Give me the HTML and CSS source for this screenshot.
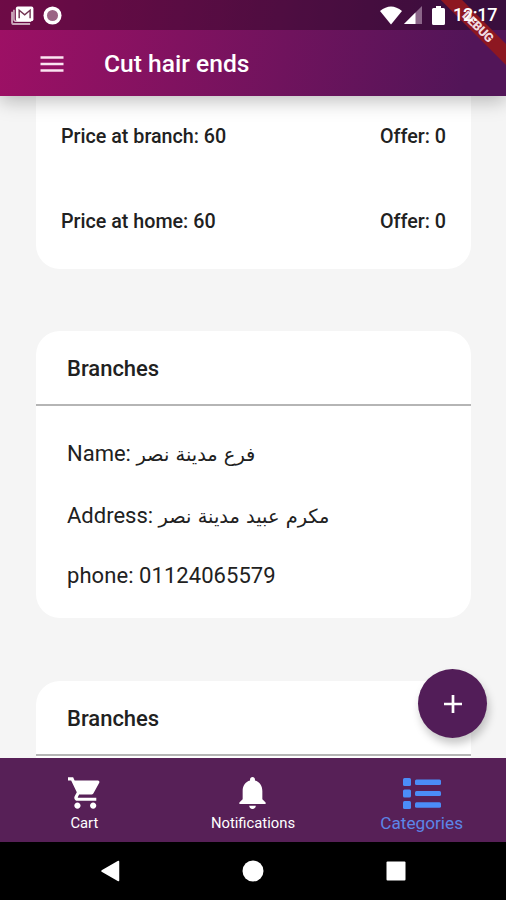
FILE: index.html
```html
<!DOCTYPE html>
<html lang="en">
<head>
<meta charset="utf-8">
<title>Cut hair ends</title>
<link rel="stylesheet" href="styles.css">
</head>
<body>
<div class="screen">
  <header class="header">
    <div class="status">
      <svg class="status-mail" viewBox="0 0 24 20"><path d="M1 6v11q0 2 2 2h17" fill="none" stroke="#c9a6b9" stroke-width="2"/><path d="M3 4v10q0 2 2 2h16" fill="none" stroke="#dcc5d1" stroke-width="1.5"/><rect x="5" y="0.5" width="18.5" height="15.5" rx="2" fill="#fff"/><path d="M8.500 13V4.500l5.800 4.700L20 4.500V13" fill="none" stroke="#713452" stroke-width="1.500"/></svg>
      <svg class="status-dot" viewBox="0 0 20 20"><circle cx="10" cy="10" r="9.5" fill="#fff"/><circle cx="10" cy="10" r="5.800" fill="#9b6585"/></svg>
      <span class="grow"></span>
      <svg class="status-wifi" viewBox="0 0 22 19"><path d="M0 5Q11-4 22 5L11 18.500z" fill="#fff"/></svg>
      <svg class="status-signal" viewBox="0 0 18 18"><path d="M0 18L18 0v18z" fill="#8b6689"/><path d="M0 18L11.500 6.500V18z" fill="#fff"/></svg>
      <svg class="status-battery" viewBox="0 0 13 19"><path d="M4 0h5v2h2.500q1.500 0 1.500 1.500v14q0 1.500-1.500 1.500h-10Q0 19 0 17.500v-14Q0 2 1.500 2H4z" fill="#fff"/></svg>
      <span class="clock">12:17</span>
    </div>
    <div class="appbar">
      <svg class="menu" viewBox="0 0 24 16"><path d="M.5 1.500h23M.5 8h23M.5 14.500h23" stroke="#fbe4f1" stroke-width="2.700"/></svg>
      <h1 class="title">Cut hair ends</h1>
    </div>
    <div class="debug"><span>DEBUG</span></div>
  </header>
  <main class="content">
    <section class="card prices">
      <div class="price"><span>Price at branch: 60</span><span>Offer: 0</span></div>
      <div class="price"><span>Price at home: 60</span><span>Offer: 0</span></div>
    </section>
    <section class="card branch">
      <h2 class="heading">Branches</h2>
      <div class="details">
        <p>Name: <bdi class="arabic">فرع مدينة نصر</bdi></p>
        <p>Address: <bdi class="arabic">مكرم عبيد مدينة نصر</bdi></p>
        <p class="phone">phone: 01124065579</p>
      </div>
    </section>
    <section class="card next">
      <h2 class="heading">Branches</h2>
    </section>
    <button class="fab" aria-label="Add"><svg viewBox="0 0 18 18"><path d="M9 0v18M0 9h18" stroke="#fff" stroke-width="2.700"/></svg></button>
  </main>
  <nav class="tabs">
    <div class="tab"><svg class="tab-icon" viewBox="1 2 21 20"><path fill="#fff" d="M7 18c-1.100 0-1.990.9-1.990 2S5.900 22 7 22s2-.9 2-2-.9-2-2-2zM1 2v2h2l3.600 7.590-1.350 2.450c-.16.280-.25.610-.25.960 0 1.100.9 2 2 2h12v-2H7.420c-.14 0-.25-.11-.25-.25l.03-.12.900-1.630h7.450c.75 0 1.410-.41 1.750-1.030l3.580-6.490A1 1 0 0 0 20 4H5.210l-.94-2H1zm16 16c-1.100 0-1.990.9-1.990 2s.89 2 1.990 2 2-.9 2-2-.9-2-2-2z"/></svg><span>Cart</span></div>
    <div class="tab"><svg class="tab-icon bell" viewBox="4 2.500 16 19.500"><path fill="#fff" d="M12 22c1.100 0 2-.9 2-2h-4c0 1.100.89 2 2 2zm6-6v-5c0-3.070-1.640-5.640-4.500-6.320V4c0-.83-.67-1.500-1.500-1.500s-1.500.67-1.500 1.500v.68C7.630 5.360 6 7.920 6 11v5l-2 2v1h16v-1l-2-2z"/></svg><span>Notifications</span></div>
    <div class="tab active"><svg class="tab-icon list" viewBox="0 0 38 31"><g fill="#4b8df8"><rect width="8" height="8" rx="1.500"/><rect y="11.500" width="8" height="8" rx="1.500"/><rect y="23" width="8" height="8" rx="1.500"/><rect x="12" y="1.500" width="26" height="5.500" rx="1.500"/><rect x="12" y="13" width="26" height="5" rx="1.500"/><rect x="12" y="24.300" width="26" height="5.500" rx="1.500"/></g></svg><span>Categories</span></div>
  </nav>
  <div class="system">
    <svg viewBox="0 0 22 22"><path d="M18.500 1.500v19L2 11z" fill="#fff" stroke="#fff" stroke-width="1.500" stroke-linejoin="round"/></svg>
    <svg viewBox="0 0 22 22"><circle cx="11" cy="11" r="10.500" fill="#fff"/></svg>
    <svg viewBox="0 0 22 22"><rect x="1.500" y="1.500" width="19" height="19" rx="1" fill="#fff"/></svg>
  </div>
</div>
</body>
</html>
```
FILE: styles.css
```css
* { box-sizing: border-box; }
body { margin: 0; font-family: Roboto, "Liberation Sans", sans-serif; color: #212121; }
h1, h2, p { margin: 0; }
svg { display: block; flex: none; }
.screen { height: 900px; display: flex; flex-direction: column; overflow: hidden; background: #f5f5f5; }

.header { position: relative; z-index: 2; flex: none; height: 96px; background: linear-gradient(100deg, #9e1065 0%, #521558 92%); box-shadow: 0 5px 18px rgba(0,0,0,.26); }
.status { display: flex; height: 30px; align-items: center; padding: 0 9px 0 11px; background: rgba(0,0,0,.3); }
.status-mail { width: 23px; height: 19px; }
.status-dot { width: 19px; height: 19px; margin-left: 9px; }
.grow { flex: 1; }
.status-wifi { width: 22px; height: 19px; }
.status-signal { width: 18px; height: 18px; margin-left: 2px; }
.status-battery { width: 13px; height: 19px; margin-left: 10px; }
.clock { position: relative; z-index: 2; width: 44px; margin-left: 8px; color: #fff; font-size: 18px; line-height: 32px; font-weight: 500; white-space: nowrap; letter-spacing: -.3px; }
.appbar { display: flex; align-items: center; height: 66px; padding: 1px 0 0 40px; }
.menu { width: 24px; height: 16px; }
.title { margin-left: 40px; color: #fff; font-size: 24.600px; font-weight: 500; line-height: 30px; white-space: nowrap; }
.debug { position: absolute; top: 0; right: 0; width: 68px; height: 74px; overflow: hidden; }
.debug span { position: absolute; left: -30px; top: 19px; width: 140px; height: 15px; transform: rotate(45deg); background: #8d1721; color: #f1dce0; font-size: 12.500px; line-height: 15px; font-weight: 900; letter-spacing: -.4px; text-align: center; }

.content { position: relative; flex: 1; min-height: 0; overflow: hidden; padding: 0 35px 0 36px; }
.card { background: #fff; border-radius: 24px; }
.prices { height: 173px; border-radius: 0 0 24px 24px; padding: 28px 25px 0; font-size: 19.700px; font-weight: 500; line-height: 26px; }
.price { display: flex; justify-content: space-between; height: 85px; }
.branch { height: 287px; margin-top: 62px; }
.next { height: 287px; margin-top: 63px; }
.heading { height: 75px; padding-left: 31px; border-bottom: 2px solid #b5b5b5; font-size: 22px; font-weight: 500; line-height: 75px; }
.details { display: flex; flex-direction: column; padding: 33px 31px 0; font-size: 22px; line-height: 30px; gap: 32px; }
.details p { height: 30px; white-space: nowrap; }
.details .phone { margin-top: -2px; letter-spacing: .06px; }
.arabic { font-family: "DejaVu Sans", sans-serif; font-size: 19.400px; }
.fab { position: absolute; left: 418px; top: 573px; display: flex; align-items: center; justify-content: center; width: 69px; height: 69px; padding: 0; border: 0; border-radius: 50%; background: #521d58; box-shadow: 2px 6px 9px rgba(0,0,0,.22); }
.fab svg { width: 18px; height: 18px; }

.tabs { flex: none; display: grid; grid-template-columns: repeat(3, 1fr); height: 84px; padding-top: 19px; background: #572057; color: #fff; }
.tab { display: flex; flex-direction: column; align-items: center; font-size: 14.800px; line-height: 20px; }
.tab-icon { width: 33px; height: 32px; margin-bottom: 4px; }
.bell { width: 27px; }
.list { width: 38px; height: 31px; margin-top: 1px; }
.active { color: #5c86e8; font-size: 17.200px; line-height: 21px; }
.system { flex: none; display: grid; grid-template-columns: repeat(3, 142.500px); justify-content: center; align-items: center; justify-items: center; height: 58px; background: #000; }
.system svg { width: 22px; height: 22px; }
```
